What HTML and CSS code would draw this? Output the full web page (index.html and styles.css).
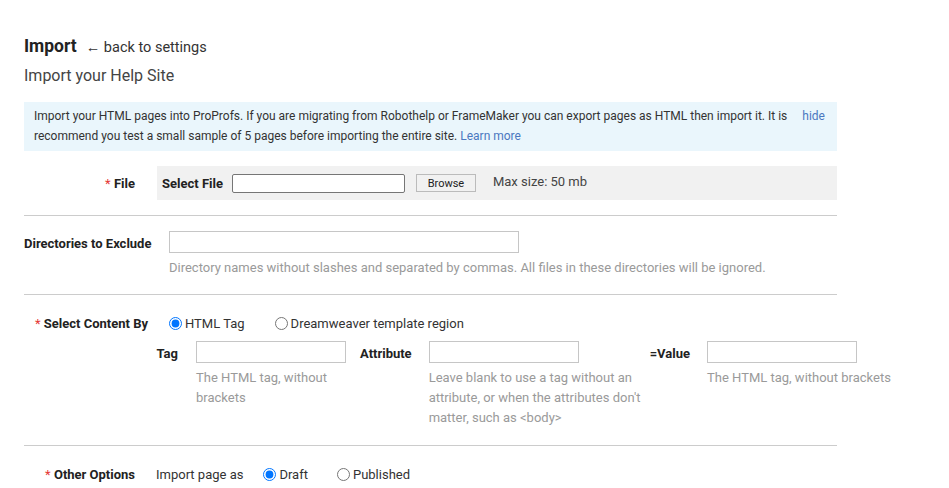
FILE: index.html
```html
<!DOCTYPE html>
<html lang="en">
<head>
  <meta charset="UTF-8">
  <meta name="viewport" content="width=device-width, initial-scale=1.0">
  <title>Import</title>
  <link rel="stylesheet" href="styles.css">
</head>
<body>
  <div class="page">
    <div class="page-header">
      <h1>Import</h1>
      <a class="back-link" href="#">&larr; back to settings</a>
    </div>
    <h2 class="subtitle">Import your Help Site</h2>

    <div class="info-box">
      <p>Import your HTML pages into ProProfs. If you are migrating from Robothelp or FrameMaker you can export pages as HTML then import it. It is recommend you test a small sample of 5 pages before importing the entire site. <a href="#">Learn more</a></p>
      <a class="hide-link" href="#">hide</a>
    </div>

    <div class="form-row row-file">
      <label class="field-label label-file"><span class="req">*</span> File</label>
      <div class="file-box">
        <span class="inline-label">Select File</span>
        <input type="text" class="file-input">
        <button class="browse-btn">Browse</button>
        <span class="max-size">Max size: 50 mb</span>
      </div>
    </div>

    <hr class="divider">

    <div class="form-row row-dirs">
      <label class="field-label label-dirs">Directories to Exclude</label>
      <div class="field">
        <input type="text" class="text-input dirs-input">
        <p class="help">Directory names without slashes and separated by commas. All files in these directories will be ignored.</p>
      </div>
    </div>

    <hr class="divider">

    <div class="form-row row-content">
      <label class="field-label label-content"><span class="req">*</span> Select Content By</label>
      <div class="radios">
        <label class="radio"><input type="radio" name="content" checked> HTML Tag</label>
        <label class="radio"><input type="radio" name="content"> Dreamweaver template region</label>
      </div>
    </div>

    <div class="tag-row">
      <div class="tag-field">
        <span class="tag-label label-tag">Tag</span>
        <div class="field">
          <input type="text" class="text-input small-input">
          <p class="help help-tag">The HTML tag, without brackets</p>
        </div>
      </div>
      <div class="tag-field">
        <span class="tag-label label-attr">Attribute</span>
        <div class="field">
          <input type="text" class="text-input small-input">
          <p class="help help-attr">Leave blank to use a tag without an attribute, or when the attributes don't matter, such as &lt;body&gt;</p>
        </div>
      </div>
      <div class="tag-field">
        <span class="tag-label label-value">=Value</span>
        <div class="field">
          <input type="text" class="text-input small-input">
          <p class="help help-value">The HTML tag, without brackets</p>
        </div>
      </div>
    </div>

    <hr class="divider">

    <div class="form-row row-other">
      <label class="field-label label-other"><span class="req">*</span> Other Options</label>
      <span class="plain-label">Import page as</span>
      <div class="radios">
        <label class="radio radio-draft"><input type="radio" name="status" checked> Draft</label>
        <label class="radio"><input type="radio" name="status"> Published</label>
      </div>
    </div>
  </div>
</body>
</html>
```
FILE: styles.css
```css
body {
  font-family: Roboto, "Liberation Sans", Arial, sans-serif;
  margin: 0;
  padding: 0;
  background-color: #fff;
  color: #333;
}

.page {
  width: 813px;
  padding: 36px 0 0 24px;
}

.page-header {
  display: flex;
  align-items: baseline;
  gap: 9px;
}

.page-header h1 {
  margin: 0;
  font-size: 17.5px;
  font-weight: bold;
  color: #222;
}

.back-link {
  color: #333;
  font-size: 14.5px;
  text-decoration: none;
}

.subtitle {
  margin: 10px 0 17px;
  font-size: 16px;
  font-weight: normal;
  color: #444;
}

.info-box {
  display: flex;
  justify-content: space-between;
  align-items: flex-start;
  background-color: #eaf6fc;
  padding: 4px 10px 5px 10px;
  font-size: 12px;
  line-height: 20px;
}

.info-box p {
  margin: 0;
  width: 760px;
}

.info-box a {
  color: #4b78c0;
  text-decoration: none;
}

.hide-link {
  margin-right: 2px;
}

.form-row {
  display: flex;
  align-items: center;
}

.field-label {
  font-size: 13px;
  font-weight: bold;
  color: #222;
}

.req {
  color: #e53935;
  font-weight: normal;
}

.row-file {
  margin-top: 15px;
}

.label-file {
  width: 111px;
  text-align: right;
  margin-right: 22px;
}

.file-box {
  flex: 1;
  display: flex;
  align-items: center;
  height: 34px;
  background-color: #f1f1f1;
  padding-left: 5px;
  font-size: 13px;
}

.inline-label {
  font-weight: bold;
  color: #222;
  margin-right: 9px;
}

.file-input {
  width: 173px;
  height: 19px;
  box-sizing: border-box;
  border: 1px solid #767676;
  border-radius: 2px;
  margin-right: 11px;
}

.browse-btn {
  width: 60px;
  height: 18px;
  font-family: inherit;
  font-size: 11px;
  color: #222;
  background-color: #f1f1f1;
  border: 1px solid #bbb;
  padding: 0;
  margin-right: 17px;
}

.max-size {
  font-size: 13px;
  color: #444;
  margin-top: -4px;
}

.divider {
  border: none;
  border-top: 1px solid #ccc;
  margin: 15px 0 0;
}

.row-dirs {
  align-items: flex-start;
  margin-top: 15px;
}

.label-dirs {
  width: 145px;
  padding-top: 5px;
}

.text-input {
  height: 22px;
  box-sizing: border-box;
  border: 1px solid #c6c6c6;
  display: block;
}

.dirs-input {
  width: 350px;
}

.help {
  margin: 5px 0 0;
  font-size: 13px;
  line-height: 20px;
  color: #9a9a9a;
}

.row-dirs + .divider {
  margin-top: 16px;
}

.row-content {
  margin-top: 21px;
}

.label-content {
  width: 124px;
  text-align: right;
  margin-right: 21px;
}

.radios {
  display: flex;
  gap: 14px;
}

.radio {
  display: flex;
  align-items: center;
  font-size: 13px;
  color: #333;
  gap: 3px;
}

.radio input {
  margin: 0;
  width: 13px;
  height: 13px;
}

.row-content .radios {
  gap: 30px;
}

.tag-row {
  display: flex;
  margin-top: 10px;
}

.tag-field {
  display: flex;
  align-items: flex-start;
}

.tag-label {
  font-size: 13px;
  font-weight: bold;
  color: #222;
  padding-top: 5px;
}

.label-tag {
  width: 154px;
  text-align: right;
  margin-right: 18px;
}

.label-attr {
  margin-left: 14px;
  margin-right: 17px;
}

.label-value {
  margin-left: 0;
  margin-right: 17px;
}

.small-input {
  width: 150px;
}

.help-tag {
  width: 150px;
}

.help-attr {
  width: 221px;
}

.help-value {
  width: 200px;
}

.tag-row + .divider {
  margin-top: 17px;
}

.row-other {
  margin-top: 21px;
}

.label-other {
  width: 111px;
  text-align: right;
  margin-right: 21px;
}

.plain-label {
  font-size: 13px;
  color: #333;
  margin-right: 20px;
}

.row-other .radios {
  gap: 29px;
}
```
